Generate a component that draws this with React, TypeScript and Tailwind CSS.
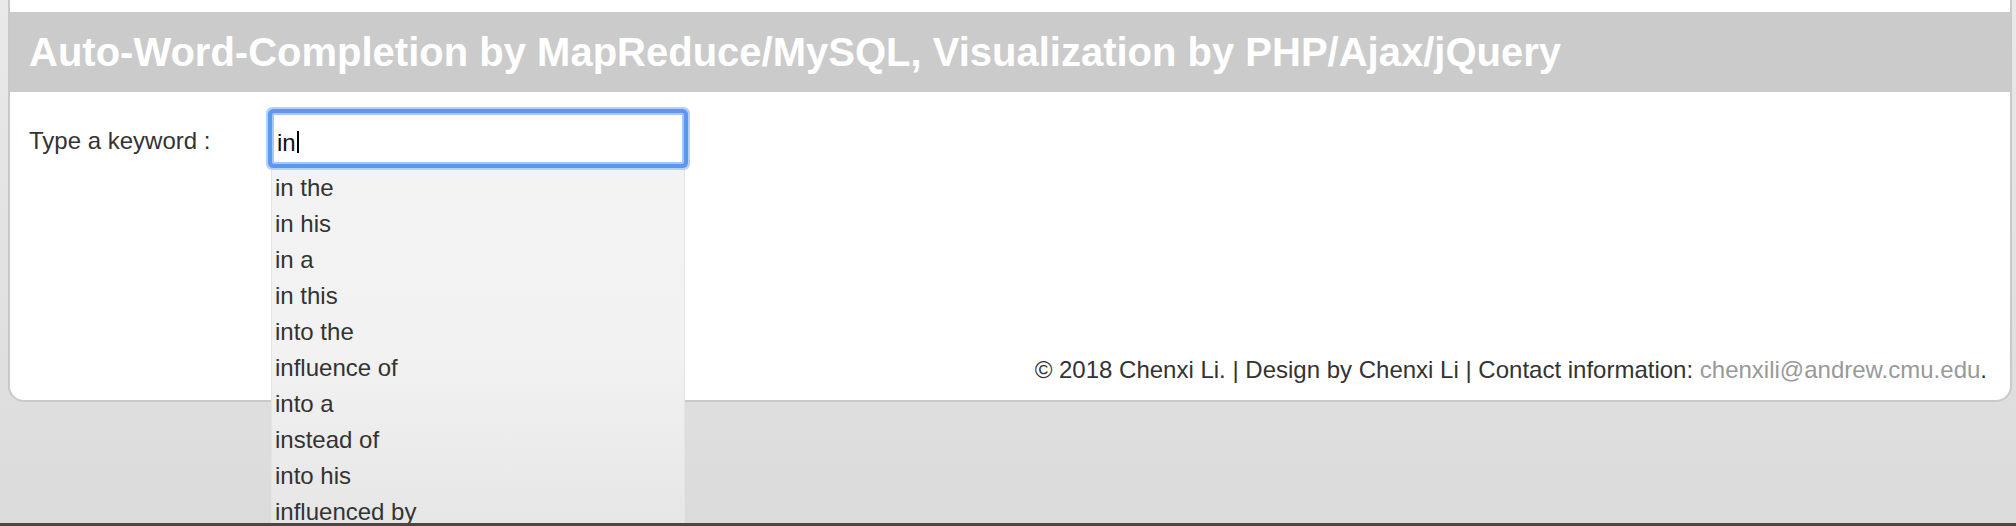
import React from "react";

const items = [
  "in the",
  "in his",
  "in a",
  "in this",
  "into the",
  "influence of",
  "into a",
  "instead of",
  "into his",
  "influenced by",
];

export default function App() {
  return (
    <div className="h-[526px] w-[2016px] flex flex-col overflow-hidden bg-gradient-to-b from-[#e9e9e9] to-[#dbdbdb] font-['Liberation_Sans',Arial,sans-serif] text-[#333333]">
      <div className="flex-1 min-h-0 overflow-hidden">
        <div className="ml-[8px] mr-[4px] bg-white border-2 border-t-0 border-[#c9c9c9] rounded-b-[16px] pt-[12px]">
          <div className="bg-[#cbcbcb] pl-[19px] pt-[18px] pb-[17px] text-[40px] leading-[45px] font-bold text-white whitespace-nowrap">
            Auto-Word-Completion by MapReduce/MySQL, Visualization by PHP/Ajax/jQuery
          </div>
          <div className="flex items-start pl-[19px] pt-[21px]">
            <div className="w-[243px] mt-[14px] text-[24px] leading-[27px] whitespace-nowrap">
              Type a keyword :
            </div>
            <div className="relative">
              <div className="w-[412px] h-[51px] border-2 border-[#a9c7f6] rounded-[2px] bg-white pl-[3px] pt-[14px] text-[24px] leading-[27px] text-[#111] shadow-[0_0_0_4px_#5f97ee,0_0_0_6px_rgba(150,188,246,0.7)] flex items-start">
                <span>in</span>
                <span className="inline-block w-[2px] h-[22px] bg-black ml-[1px] mt-[2px]" />
              </div>
              <div className="absolute left-[-1px] top-[57px] w-[414px] h-[370px] bg-gradient-to-b from-[#f3f3f3] via-[#f2f2f2] to-[#e5e5e5] border-x border-[#e4e4e4] pl-[3px] z-10">
                {items.map((it) => (
                  <div key={it} className="text-[24px] leading-[36px] whitespace-nowrap">
                    {it}
                  </div>
                ))}
              </div>
            </div>
          </div>
          <div className="mt-[192px] pb-[17px] pr-[23px] text-right text-[24px] leading-[27px] whitespace-nowrap">
            © 2018 Chenxi Li. | Design by Chenxi Li | Contact information:{" "}
            <span className="text-[#999999]">chenxili@andrew.cmu.edu</span>.
          </div>
        </div>
      </div>
      <div className="h-[3px] bg-[#4a4745] shrink-0" />
    </div>
  );
}
